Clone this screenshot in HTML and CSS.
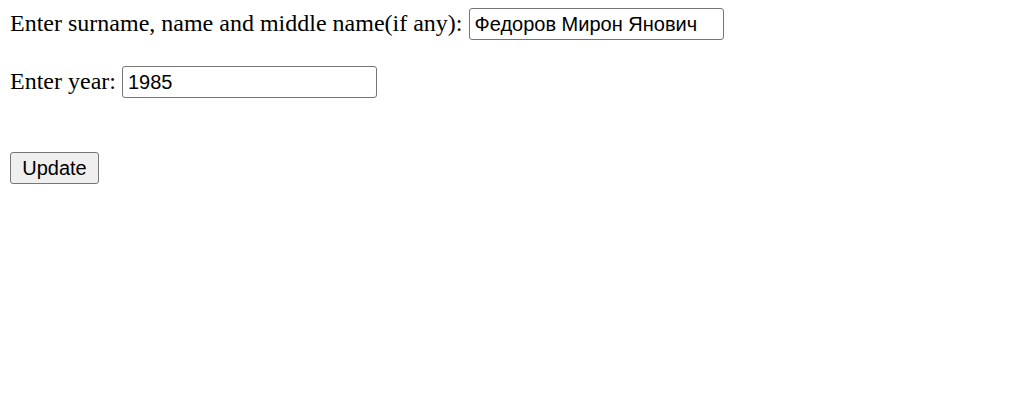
FILE: index.html
```html
<!DOCTYPE html>
<html>
<head>
<meta charset="utf-8">
<link rel="stylesheet" href="styles.css">
</head>
<body>
<form class="form">
  <div class="row">Enter surname, name and middle name(if any): <input class="field" type="text" value="Федоров Мирон Янович"></div>
  <div class="row">Enter year: <input class="field" type="text" value="1985"></div>
  <div class="actions"><button class="btn" type="button">Update</button></div>
</form>
</body>
</html>
```
FILE: styles.css
```css
html, body {
  background: #fff;
}
body {
  margin: 0;
  padding: 8px 10px;
  font-family: "Liberation Serif", "Times New Roman", serif;
  font-size: 24px;
  color: #000;
}
.form {
  display: block;
}
.row {
  height: 32px;
  line-height: 30px;
  margin-bottom: 26px;
  white-space: nowrap;
}
.field {
  box-sizing: border-box;
  width: 255px;
  height: 32px;
  padding: 1px 5px;
  border: 1px solid #767676;
  border-radius: 3px;
  font-family: "Liberation Sans", Arial, sans-serif;
  font-size: 20px;
  color: #000;
  vertical-align: top;
  background: #fff;
}
.actions {
  padding-top: 28px;
}
.btn {
  box-sizing: border-box;
  width: 89px;
  height: 32px;
  padding: 1px 6px;
  border: 1px solid #767676;
  border-radius: 3px;
  background: #efefef;
  font-family: "Liberation Sans", Arial, sans-serif;
  font-size: 20px;
  color: #000;
}
```
